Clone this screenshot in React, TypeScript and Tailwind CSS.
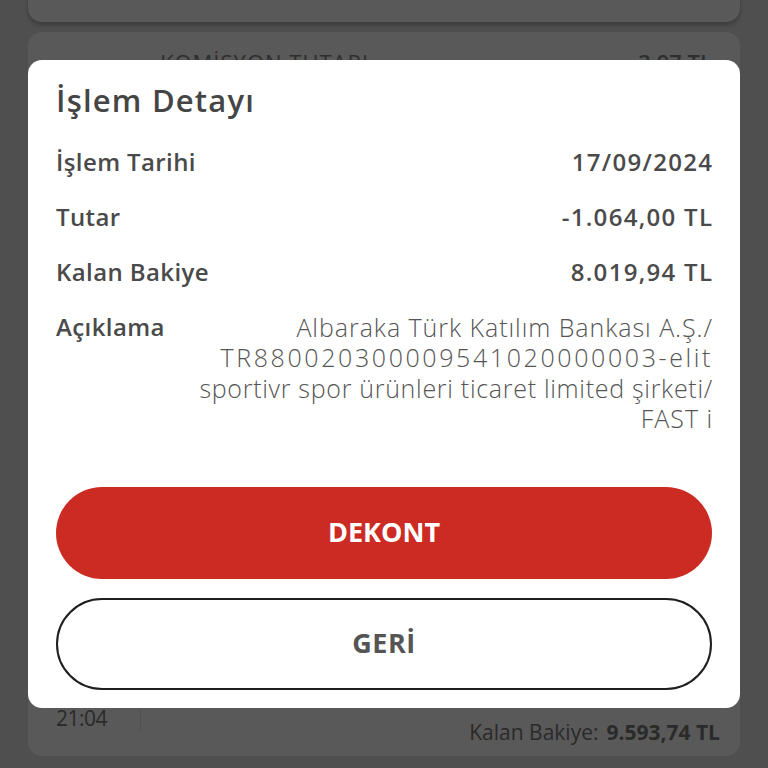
import React from "react";

const font = { fontFamily: '"Open Sans", "Noto Sans", sans-serif' };

function Row({ label, value }: { label: string; value: string }) {
  return (
    <div className="flex items-center justify-between h-[55px]">
      <span className="text-[24px] font-semibold text-[#4a4a4a] tracking-[0.4px]">{label}</span>
      <span className="text-[24px] font-semibold text-[#4a4a4a] tracking-[1.3px] -mr-[1.3px]">{value}</span>
    </div>
  );
}

export default function App() {
  return (
    <div className="relative w-[768px] h-[768px] overflow-hidden bg-[#4f4f4f]" style={font}>
      {/* background cards */}
      <div className="absolute inset-x-[28px] top-[-20px] h-[42px] rounded-[14px] bg-[#595959] shadow-[0_3px_4px_rgba(0,0,0,0.25)]" />
      <div className="absolute left-[28px] right-[28px] top-[32px] h-[100px] rounded-[14px] bg-[#595959]">
        <div className="flex justify-between pl-[132px] pr-[28px] pt-[14px] text-[22px] text-[#2e2e2e]">
          <span className="tracking-[1px]">KOMİSYON TUTARI</span>
          <span className="font-semibold">3,97 TL</span>
        </div>
      </div>
      <div className="absolute left-[28px] right-[28px] top-[600px] h-[156px] rounded-[14px] bg-[#595959]">
        <div className="absolute left-[28px] top-[103px] text-[21px] text-[#2a2a2a] tracking-[-0.5px]">21:04</div>
        <div className="absolute left-[112px] top-[104px] h-[28px] w-px bg-[#505050]" />
        <div className="absolute right-[20px] top-[117px] flex gap-[8px] text-[21px] text-[#2a2a2a]">
          <span>Kalan Bakiye:</span>
          <span className="font-bold">9.593,74 TL</span>
        </div>
      </div>

      {/* modal */}
      <div className="absolute left-[28px] top-[60px] w-[712px] h-[648px] rounded-[14px] bg-white px-[28px] pt-[20px]">
        <h1 className="text-[31px] font-semibold text-[#454545] leading-[40px] tracking-[1.2px]">İşlem Detayı</h1>
        <div className="mt-[14.5px]">
          <Row label="İşlem Tarihi" value="17/09/2024" />
          <Row label="Tutar" value="-1.064,00 TL" />
          <Row label="Kalan Bakiye" value="8.019,94 TL" />
          <div className="flex justify-between pt-[12px]">
            <span className="text-[24px] font-semibold text-[#4a4a4a] leading-[30px] tracking-[0.4px]">Açıklama</span>
            <div className="flex flex-col items-end text-[25px] font-light text-[#555] leading-[30.5px] tracking-[0.95px] -mr-[1px]">
              <span className="block h-[30.5px]">Albaraka Türk Katılım Bankası A.Ş./</span>
              <span className="block h-[30.5px] tracking-[2.6px]">TR880020300009541020000003-elit</span>
              <span className="block h-[30.5px] tracking-[0.7px]">sportivr spor ürünleri ticaret limited şirketi/</span>
              <span className="block h-[30.5px]">FAST i</span>
            </div>
          </div>
        </div>
        <div className="mt-[53px] flex flex-col gap-[19px]">
          <button className="h-[92px] w-full rounded-full bg-[#cc2b24] text-white text-[27px] font-bold">
            DEKONT
          </button>
          <button className="h-[92px] w-full rounded-full border-2 border-[#1e1e1e] bg-white text-[#555] text-[27px] font-bold tracking-[0.5px]">
            GERİ
          </button>
        </div>
      </div>
    </div>
  );
}
